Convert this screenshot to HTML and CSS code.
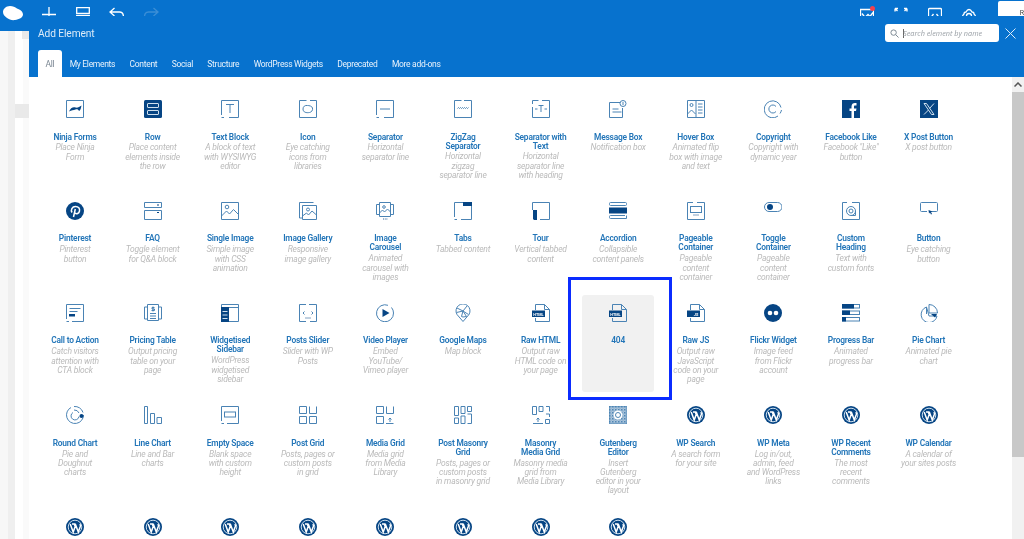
FILE: index.html
```html
<!DOCTYPE html>
<html lang="en">
<head>
<meta charset="utf-8">
<title>Add Element</title>
<link rel="stylesheet" href="styles.css">
</head>
<body>
<svg class="sprite" aria-hidden="true">
<defs>
<pattern id="qr" width="3" height="3" patternUnits="userSpaceOnUse"><rect width="3" height="3" fill="#a9c3da"/><rect width="1.5" height="1.5" fill="#4f86b5"/><rect x="1.5" y="1.5" width="1" height="1" fill="#6f9cc3"/></pattern>
<symbol id="i-ninja" viewBox="0 0 18 18"><path d="M.5 17.5V.5h17v17z"/><path class="s" d="M3 11.5c1.500-3.500 4-5 6.500-4 2 .5 4-.5 6-2-.5 2.500-1 5-2.500 5.500-.5-1.500-2-2-3.500-1.500-2 .5-4 1-6.500 2z"/></symbol>
<symbol id="i-row" viewBox="0 0 18 18"><rect class="s" width="18" height="18" rx="1.500"/><rect class="w" x="3.500" y="3.500" width="11" height="4" rx=".5"/><rect class="w" x="3.500" y="10.500" width="11" height="4" rx=".5"/></symbol>
<symbol id="i-text" viewBox="0 0 18 18"><path d="M.5 15V.5h17v17H8M3 17.500H.5"/><path d="M5 4.500h8M9 4.500V13"/></symbol>
<symbol id="i-icon" viewBox="0 0 18 18"><path d="M11 .5h6.500v17H.5V.5h7"/><path d="M4 9c0-2.500 2-4 4.500-3.500 1.500 0 4.500.5 5 2.500.5 2.500-1 4-3 4.500-3 .5-6.500 0-6.500-3.500z"/></symbol>
<symbol id="i-sep" viewBox="0 0 18 18"><path d="M.5 15V.5h17v17H8M3 17.500H.5"/><path d="M4 9h10"/></symbol>
<symbol id="i-zig" viewBox="0 0 18 18"><path d="M10 .5h7.500v17H.5V.5h7"/><path d="M3.500 8.500l1-1 1 1 1-1 1 1 1-1 1 1 1-1 1 1 1-1 1 1 1-1"/></symbol>
<symbol id="i-septext" viewBox="0 0 18 18"><path d="M10 .5h7.500v17H.5V7M.5 4V.5h6"/><path d="M3 9h2.500M12.500 9H15M6.500 5.500h5M9 5.500V12"/></symbol>
<symbol id="i-msg" viewBox="0 0 18 18"><path d="M11 2.500H.5v15h13V8"/><path d="M3.500 9h6M3.500 12h9"/><circle cx="14" cy="3.500" r="3"/><path d="M14 2v3"/></symbol>
<symbol id="i-hover" viewBox="0 0 18 18"><path d="M.5.500h17v17H.5zM9 .5v17"/><circle cx="4.500" cy="5" r="1.500"/><path d="M.5 14l4-4 4 4M11 4h4.500M11 7h4.500M11 10h4.500M11 13h4.500"/></symbol>
<symbol id="i-copy" viewBox="0 0 18 18"><path d="M17 7.500A8.500 8.500 0 1 0 14 16"/><path d="M17.500 10a8.500 8.500 0 0 1-1.500 3.500"/><path d="M12 6.500a4 4 0 1 0 0 5"/></symbol>
<symbol id="i-fb" viewBox="0 0 18 18"><rect class="s" width="18" height="18"/><path class="k" d="M9.500 18v-7H7.500V8.500h2V6.500C9.500 4 11 3 13 3h1.500v2.500H13c-.8 0-1 .5-1 1.200v1.800h2.500l-.5 2.500h-2v7z"/></symbol>
<symbol id="i-x" viewBox="0 0 18 18"><rect class="s" width="18" height="18"/><path class="w" d="M4 3.500h2.500l7.500 11h-2.500zM14 3.500l-4.500 5M8.500 10L4 14.500"/></symbol>
<symbol id="i-pin" viewBox="0 0 18 18"><circle class="s" cx="9" cy="9" r="9"/><path class="w2" d="M6 10.500C4.500 8 6 4.500 9.500 4.500c3 0 4.500 2 4 4.500-.5 2.500-3 3.500-4.500 2M9.300 7L7.500 15"/></symbol>
<symbol id="i-faq" viewBox="0 0 18 18"><path d="M.5.500h17v5H.5zM.5 8.500h17v9H.5z"/><path class="dk" d="M13 3h2M13 10.500h2"/></symbol>
<symbol id="i-img" viewBox="0 0 18 18"><path d="M.5.500h17v17H.5z"/><circle cx="6" cy="5" r="1.800"/><path d="M.5 14l5-5 3 3 4-4.500 5 5"/></symbol>
<symbol id="i-gal" viewBox="0 0 18 18"><path d="M3.500 3.500h14v14h-14zM.5 14V.5h14"/><path d="M.5 14v2h3"/><circle cx="9" cy="7.500" r="1.500"/><path d="M3.500 14l4-3 2 2 3.500-4 4.500 4"/></symbol>
<symbol id="i-car" viewBox="0 0 18 18"><path d="M3.500.5h11v14h-11zM3.500 2.500H.5v10h3M14.500 2.500h3v10h-3"/><circle cx="8" cy="5" r="1.300"/><path d="M3.500 11l3-3 2 2 3-3 3 3"/><path class="dk" d="M7 17h.8M8.800 17h.8M10.500 17h.8"/></symbol>
<symbol id="i-tabs" viewBox="0 0 18 18"><path d="M.5 15V.5h17v17H7M3 17.500H.5"/><rect class="s" x="9" width="9" height="4"/></symbol>
<symbol id="i-tour" viewBox="0 0 18 18"><path d="M.5 8V.5h17v17H8"/><path class="s" d="M1 8h4v10H2l-1-1z"/></symbol>
<symbol id="i-acc" viewBox="0 0 18 18"><rect x=".5" y=".5" width="17" height="3" rx="1"/><rect class="s" y="5.500" width="18" height="6"/><path d="M16 13.500H1.500a1 1 0 0 0-1 1v1a1 1 0 0 0 1 1h16v-3"/></symbol>
<symbol id="i-page" viewBox="0 0 18 18"><path d="M6 .5H.5v17h17V.5H10"/><rect x="3.500" y="4.500" width="11" height="6"/><path class="dk" d="M6.500 13h1M8.500 13h1M10.500 13h1"/></symbol>
<symbol id="i-tog" viewBox="0 0 18 18"><path d="M5 .5h8.500a4.500 4.500 0 0 1 0 9H5a4.500 4.500 0 0 1 0-9z"/><circle class="s" cx="6" cy="5" r="3"/></symbol>
<symbol id="i-head" viewBox="0 0 18 18"><path d="M5 .5H.5v17h17V.5H10"/><circle cx="9" cy="9" r="4.500"/><circle cx="9" cy="9" r="2"/><path d="M13.500 9v4.500H9"/></symbol>
<symbol id="i-btn" viewBox="0 0 18 18"><path d="M10 9.500h6.500a1 1 0 0 0 1-1v-7a1 1 0 0 0-1-1h-15a1 1 0 0 0-1 1v7a1 1 0 0 0 1 1H7"/><path class="s" d="M8.500 8l4 1.500-1.500.5 1 2-1 .5-1-2-1 1z"/></symbol>
<symbol id="i-cta" viewBox="0 0 18 18"><path d="M.5 15V.5h17v17H6M3 17.500H.5"/><path d="M3.500 4.500h11M3.500 7.500h8"/><rect class="s" x="3" y="10" width="6" height="2.500"/></symbol>
<symbol id="i-price" viewBox="0 0 18 18"><path d="M3.500.5h11v16h-11zM3.500 3H.5v12h3M14.500 3h3v12h-3"/><path d="M6 9.500h6M6 12h6M6 14.500h6M9 2.500v5M10.500 3.500H8v1.500h2.500v1.500H7.500"/></symbol>
<symbol id="i-widget" viewBox="0 0 18 18"><path d="M.5.500h17v17H.5z"/><rect class="s" y="3" width="8" height="15"/><path class="w" d="M1.500 7.500h5M1.500 11h5M1.500 14.500h5"/><path d="M8 3.500h10"/></symbol>
<symbol id="i-posts" viewBox="0 0 18 18"><path d="M10 .5h7.500v17H11M7 17.500H.5V.5H7"/><path d="M5.500 7.500L4 9l1.500 1.500M12.500 7.500L14 9l-1.500 1.500"/><path class="dk" d="M6.500 14h1M8.500 14h1M10.500 14h1"/></symbol>
<symbol id="i-video" viewBox="0 0 18 18"><path d="M12 1.300A8.500 8.500 0 1 0 17.500 9a8.500 8.500 0 0 0-2-5.500"/><path class="s" d="M6.500 5l7 4-7 4z"/></symbol>
<symbol id="i-map" viewBox="0 0 18 18"><path d="M9 17.500L3 10.500A7 7 0 1 1 15 10.500z"/><path d="M3 4l6 3 4-5M2.500 8.500L9 7l5.500 3.500M9 7l-1.500 5.500L9 13l3.500-.5L9 7"/></symbol>
<symbol id="i-html" viewBox="0 0 18 18"><path d="M3.500 6V.5h9l5 5v12h-14V14"/><path d="M12.500.5v5h5"/><rect class="s" y="6.500" width="13" height="6.500"/><text class="lbl" x="6.500" y="11.500">HTML</text></symbol>
<symbol id="i-js" viewBox="0 0 18 18"><path d="M3.500 6V.5h9l5 5v12h-14V14"/><path d="M12.500.5v5h5"/><rect class="s" y="6.500" width="13" height="6.500"/><text class="lbl" x="9" y="11.500">JS</text></symbol>
<symbol id="i-flickr" viewBox="0 0 18 18"><circle class="s" cx="9" cy="9" r="9"/><circle class="k" cx="6" cy="9" r="2.300"/><circle class="k" cx="12" cy="9" r="2.300"/></symbol>
<symbol id="i-prog" viewBox="0 0 18 18"><rect x=".5" y=".5" width="17" height="3.500"/><rect class="s" width="12" height="4.500"/><rect x=".5" y="7" width="17" height="3.500"/><rect class="s" y="6.500" width="8" height="4.500"/><rect x=".5" y="13.500" width="17" height="3.500"/><rect class="s" y="13" width="4" height="4.500"/></symbol>
<symbol id="i-pie" viewBox="0 0 18 18"><path d="M6.500 3A8 8 0 1 0 17 12H9zM6.500 3v7"/><path d="M9 .5a8.500 8.500 0 0 1 8.500 8.500H9z"/><path class="s" d="M11 10h6l-2 3.500z"/></symbol>
<symbol id="i-round" viewBox="0 0 18 18"><path d="M5 1.500A8.500 8.500 0 1 0 17.500 9"/><path d="M8 .5a8.500 8.500 0 0 1 9 6M7 6.500a4 4 0 1 0 6 4"/><path d="M8 4a5 5 0 0 1 5 3"/><circle class="s" cx="15.500" cy="10" r="2"/></symbol>
<symbol id="i-line" viewBox="0 0 18 18"><path d="M.5.500h3v17h-3zM6.500 7.500h4v10h-4zM13 11.500h4.500v6H13z"/></symbol>
<symbol id="i-empty" viewBox="0 0 18 18"><path d="M.5 15V.5h17v17H6M3 17.500H.5"/><rect x="3.500" y="6" width="11" height="5"/></symbol>
<symbol id="i-pgrid" viewBox="0 0 18 18"><path d="M.5.500h7v7h-7zM10.500 7.500h7V.5M10.500.5v7M.5 10.500h7v7h-7zM10.500 10.500h7v7h-7z"/></symbol>
<symbol id="i-mgrid" viewBox="0 0 18 18"><path d="M.5.500h7v7h-7zM10.500.5v7h7V.5M.5 10.500h7v7h-7zM10 17.500h7.500M14 16v-4M12.500 13.500L14 12l1.500 1.500"/></symbol>
<symbol id="i-mas" viewBox="0 0 18 18"><path d="M.5.500h4v9h-4zM7 .5h4v7H7zM13.500.5h4v5h-4zM.5 12h4v5.500h-4zM7 10h4v7.500H7zM13.500 8h4v9.500h-4"/></symbol>
<symbol id="i-mmas" viewBox="0 0 18 18"><path d="M.5.500h4v8h-4zM7 .5h4v5H7zM14 .5h3.500v5M14 8h3.500v3M1 17.500H11M6 16v-4M4.500 13.500L6 12l1.500 1.500M13.500 13.500h4v4h-4z"/></symbol>
<symbol id="i-gut" viewBox="0 0 18 18"><rect width="18" height="18" fill="url(#qr)"/><circle class="k" cx="9" cy="9" r="4.500"/><circle class="ring" cx="9" cy="9" r="2.500"/></symbol>
<symbol id="i-wp" viewBox="0 0 18 18"><circle class="s" cx="9" cy="9" r="9"/><circle class="w" cx="9" cy="9" r="6.800"/><path class="w2" d="M4.200 6l3 8 2-5.500-1-2.500M6 6h3.500M9.300 6l3 8 2-5.500c.3-1 0-2-.5-2.500"/></symbol>
</defs>
</svg>

<div class="app">
  <header class="topbar">
    <svg class="logo" viewBox="0 0 20 15"><path class="k" d="M0 6c0-3 3-6 7-6 3 0 5 1 7 2.500 3 1 6 3 6 6 0 3-4 5-8 5.500-3 .5-6-.5-8-2S0 9 0 6z"/></svg>
    <div class="tools">
      <svg class="tool" viewBox="0 0 14 14"><path d="M7 0v14M0 7.500h14"/></svg>
      <svg class="tool" viewBox="0 0 14 14"><path d="M.7.700h12.600v5.600H.7zM.7 14V8.500h12.600V14"/></svg>
      <svg class="tool wide" viewBox="0 0 15 14"><path d="M5.500 1L1 5l4.500 4M1 5h9.500c3 0 4 2 4 5"/></svg>
      <svg class="tool wide off" viewBox="0 0 15 14"><path d="M9.500 1L14 5 9.500 9M14 5H4.500c-3 0-4 2-4 5"/></svg>
    </div>
    <div class="status">
      <span class="chart"><svg class="tool" viewBox="0 0 14 14"><path d="M.5 14V1.500h13V14M2 5.500l3 4 3-3 2 2 3-4"/></svg><i class="dot"></i></span>
      <svg class="tool" viewBox="0 0 14 14"><path d="M1 1.500l2.500 2.500M1 1.500h3M1 1.500v3M13 1.500L10.500 4M13 1.500h-3M13 1.500v3"/></svg>
      <svg class="tool" viewBox="0 0 14 14"><path d="M.5 14V2.500a1 1 0 0 1 1-1h11a1 1 0 0 1 1 1V14M5.500 7L4 9l1.500 2M8.500 7L10 9l-1.500 2"/></svg>
      <svg class="tool" viewBox="0 0 14 14"><path d="M.5 10c0-2 1-2.500 1.500-3 0-1.500 1-2 2-2 .5-1 1.500-2.500 3-2.500S9.500 4 10 5c1 0 2 .5 2 2 .5.500 1.500 1 1.500 3"/><circle cx="7" cy="9" r="2.500"/></svg>
      <div class="user-tab"><span>R</span></div>
    </div>
  </header>

  <div class="backdrop">
    <div class="rail"></div>
    <div class="strip">
      <div class="strip-block short"></div>
      <div class="strip-block"></div>
    </div>
  </div>

  <section class="modal">
    <div class="modal-head">
      <div class="title-row">
        <h2 class="modal-title">Add Element</h2>
        <div class="search">
          <svg class="search-ic" viewBox="0 0 10 10"><circle cx="4" cy="4" r="3"/><path d="M6.300 6.300L9.500 9.500"/></svg>
          <span class="caret"></span><span class="placeholder">Search element by name</span>
        </div>
        <svg class="close" viewBox="0 0 11 11"><path d="M.5.500l10 10M10.500.5l-10 10"/></svg>
      </div>
      <nav class="tabs">
        <a class="tab active">All</a><a class="tab">My Elements</a><a class="tab">Content</a><a class="tab">Social</a><a class="tab">Structure</a><a class="tab">WordPress Widgets</a><a class="tab">Deprecated</a><a class="tab">More add-ons</a>
      </nav>
    </div>
    <div class="modal-body">
      <div class="grid">
        <div class="cell"><svg class="ic"><use href="#i-ninja"/></svg><h3 class="t">Ninja Forms</h3><p class="d">Place Ninja<br>Form</p></div>
        <div class="cell"><svg class="ic"><use href="#i-row"/></svg><h3 class="t">Row</h3><p class="d">Place content<br>elements inside<br>the row</p></div>
        <div class="cell"><svg class="ic"><use href="#i-text"/></svg><h3 class="t">Text Block</h3><p class="d">A block of text<br>with WYSIWYG<br>editor</p></div>
        <div class="cell"><svg class="ic"><use href="#i-icon"/></svg><h3 class="t">Icon</h3><p class="d">Eye catching<br>icons from<br>libraries</p></div>
        <div class="cell"><svg class="ic"><use href="#i-sep"/></svg><h3 class="t">Separator</h3><p class="d">Horizontal<br>separator line</p></div>
        <div class="cell"><svg class="ic"><use href="#i-zig"/></svg><h3 class="t">ZigZag<br>Separator</h3><p class="d">Horizontal<br>zigzag<br>separator line</p></div>
        <div class="cell"><svg class="ic"><use href="#i-septext"/></svg><h3 class="t">Separator with<br>Text</h3><p class="d">Horizontal<br>separator line<br>with heading</p></div>
        <div class="cell"><svg class="ic"><use href="#i-msg"/></svg><h3 class="t">Message Box</h3><p class="d">Notification box</p></div>
        <div class="cell"><svg class="ic"><use href="#i-hover"/></svg><h3 class="t">Hover Box</h3><p class="d">Animated flip<br>box with image<br>and text</p></div>
        <div class="cell"><svg class="ic"><use href="#i-copy"/></svg><h3 class="t">Copyright</h3><p class="d">Copyright with<br>dynamic year</p></div>
        <div class="cell"><svg class="ic"><use href="#i-fb"/></svg><h3 class="t">Facebook Like</h3><p class="d">Facebook "Like"<br>button</p></div>
        <div class="cell"><svg class="ic"><use href="#i-x"/></svg><h3 class="t">X Post Button</h3><p class="d">X post button</p></div>

        <div class="cell"><svg class="ic"><use href="#i-pin"/></svg><h3 class="t">Pinterest</h3><p class="d">Pinterest<br>button</p></div>
        <div class="cell"><svg class="ic"><use href="#i-faq"/></svg><h3 class="t">FAQ</h3><p class="d">Toggle element<br>for Q&amp;A block</p></div>
        <div class="cell"><svg class="ic"><use href="#i-img"/></svg><h3 class="t">Single Image</h3><p class="d">Simple image<br>with CSS<br>animation</p></div>
        <div class="cell"><svg class="ic"><use href="#i-gal"/></svg><h3 class="t">Image Gallery</h3><p class="d">Responsive<br>image gallery</p></div>
        <div class="cell"><svg class="ic"><use href="#i-car"/></svg><h3 class="t">Image<br>Carousel</h3><p class="d">Animated<br>carousel with<br>images</p></div>
        <div class="cell"><svg class="ic"><use href="#i-tabs"/></svg><h3 class="t">Tabs</h3><p class="d">Tabbed content</p></div>
        <div class="cell"><svg class="ic"><use href="#i-tour"/></svg><h3 class="t">Tour</h3><p class="d">Vertical tabbed<br>content</p></div>
        <div class="cell"><svg class="ic"><use href="#i-acc"/></svg><h3 class="t">Accordion</h3><p class="d">Collapsible<br>content panels</p></div>
        <div class="cell"><svg class="ic"><use href="#i-page"/></svg><h3 class="t">Pageable<br>Container</h3><p class="d">Pageable<br>content<br>container</p></div>
        <div class="cell"><svg class="ic"><use href="#i-tog"/></svg><h3 class="t">Toggle<br>Container</h3><p class="d">Pageable<br>content<br>container</p></div>
        <div class="cell"><svg class="ic"><use href="#i-head"/></svg><h3 class="t">Custom<br>Heading</h3><p class="d">Text with<br>custom fonts</p></div>
        <div class="cell"><svg class="ic"><use href="#i-btn"/></svg><h3 class="t">Button</h3><p class="d">Eye catching<br>button</p></div>

        <div class="cell"><svg class="ic"><use href="#i-cta"/></svg><h3 class="t">Call to Action</h3><p class="d">Catch visitors<br>attention with<br>CTA block</p></div>
        <div class="cell"><svg class="ic"><use href="#i-price"/></svg><h3 class="t">Pricing Table</h3><p class="d">Output pricing<br>table on your<br>page</p></div>
        <div class="cell"><svg class="ic"><use href="#i-widget"/></svg><h3 class="t">Widgetised<br>Sidebar</h3><p class="d">WordPress<br>widgetised<br>sidebar</p></div>
        <div class="cell"><svg class="ic"><use href="#i-posts"/></svg><h3 class="t">Posts Slider</h3><p class="d">Slider with WP<br>Posts</p></div>
        <div class="cell"><svg class="ic"><use href="#i-video"/></svg><h3 class="t">Video Player</h3><p class="d">Embed<br>YouTube/<br>Vimeo player</p></div>
        <div class="cell"><svg class="ic"><use href="#i-map"/></svg><h3 class="t">Google Maps</h3><p class="d">Map block</p></div>
        <div class="cell"><svg class="ic"><use href="#i-html"/></svg><h3 class="t">Raw HTML</h3><p class="d">Output raw<br>HTML code on<br>your page</p></div>
        <div class="cell selected"><svg class="ic"><use href="#i-html"/></svg><h3 class="t">404</h3></div>
        <div class="cell"><svg class="ic"><use href="#i-js"/></svg><h3 class="t">Raw JS</h3><p class="d">Output raw<br>JavaScript<br>code on your<br>page</p></div>
        <div class="cell"><svg class="ic"><use href="#i-flickr"/></svg><h3 class="t">Flickr Widget</h3><p class="d">Image feed<br>from Flickr<br>account</p></div>
        <div class="cell"><svg class="ic"><use href="#i-prog"/></svg><h3 class="t">Progress Bar</h3><p class="d">Animated<br>progress bar</p></div>
        <div class="cell"><svg class="ic"><use href="#i-pie"/></svg><h3 class="t">Pie Chart</h3><p class="d">Animated pie<br>chart</p></div>

        <div class="cell"><svg class="ic"><use href="#i-round"/></svg><h3 class="t">Round Chart</h3><p class="d">Pie and<br>Doughnut<br>charts</p></div>
        <div class="cell"><svg class="ic"><use href="#i-line"/></svg><h3 class="t">Line Chart</h3><p class="d">Line and Bar<br>charts</p></div>
        <div class="cell"><svg class="ic"><use href="#i-empty"/></svg><h3 class="t">Empty Space</h3><p class="d">Blank space<br>with custom<br>height</p></div>
        <div class="cell"><svg class="ic"><use href="#i-pgrid"/></svg><h3 class="t">Post Grid</h3><p class="d">Posts, pages or<br>custom posts<br>in grid</p></div>
        <div class="cell"><svg class="ic"><use href="#i-mgrid"/></svg><h3 class="t">Media Grid</h3><p class="d">Media grid<br>from Media<br>Library</p></div>
        <div class="cell"><svg class="ic"><use href="#i-mas"/></svg><h3 class="t">Post Masonry<br>Grid</h3><p class="d">Posts, pages or<br>custom posts<br>in masonry grid</p></div>
        <div class="cell"><svg class="ic"><use href="#i-mmas"/></svg><h3 class="t">Masonry<br>Media Grid</h3><p class="d">Masonry media<br>grid from<br>Media Library</p></div>
        <div class="cell"><svg class="ic"><use href="#i-gut"/></svg><h3 class="t">Gutenberg<br>Editor</h3><p class="d">Insert<br>Gutenberg<br>editor in your<br>layout</p></div>
        <div class="cell"><svg class="ic"><use href="#i-wp"/></svg><h3 class="t">WP Search</h3><p class="d">A search form<br>for your site</p></div>
        <div class="cell"><svg class="ic"><use href="#i-wp"/></svg><h3 class="t">WP Meta</h3><p class="d">Log in/out,<br>admin, feed<br>and WordPress<br>links</p></div>
        <div class="cell"><svg class="ic"><use href="#i-wp"/></svg><h3 class="t">WP Recent<br>Comments</h3><p class="d">The most<br>recent<br>comments</p></div>
        <div class="cell"><svg class="ic"><use href="#i-wp"/></svg><h3 class="t">WP Calendar</h3><p class="d">A calendar of<br>your sites posts</p></div>

        <div class="cell"><svg class="ic"><use href="#i-wp"/></svg></div>
        <div class="cell"><svg class="ic"><use href="#i-wp"/></svg></div>
        <div class="cell"><svg class="ic"><use href="#i-wp"/></svg></div>
        <div class="cell"><svg class="ic"><use href="#i-wp"/></svg></div>
        <div class="cell"><svg class="ic"><use href="#i-wp"/></svg></div>
        <div class="cell"><svg class="ic"><use href="#i-wp"/></svg></div>
        <div class="cell"><svg class="ic"><use href="#i-wp"/></svg></div>
        <div class="cell"><svg class="ic"><use href="#i-wp"/></svg></div>
      </div>
      <div class="scrollbar">
        <svg class="sb-arrow" viewBox="0 0 8 5"><path d="M.5 4.500L4 1l3.500 3.500"/></svg>
        <div class="sb-thumb"></div>
      </div>
    </div>
  </section>
</div>
</body>
</html>
```

FILE: styles.css
```css
* { box-sizing: border-box; }
html, body { margin: 0; height: 100%; overflow: hidden; background: #fff; }
body { font-family: Roboto, "Liberation Sans", sans-serif; }
.sprite { position: absolute; width: 0; height: 0; }

.app { position: relative; width: 1024px; height: 539px; overflow: hidden; filter: blur(.4px); }

/* top toolbar behind the modal */
.topbar { display: flex; align-items: flex-start; height: 31px; background: #0772ce; position: relative; }
.logo { width: 20px; height: 15px; margin: 6px 0 0 3px; flex: none; }
.tools { display: flex; gap: 19.500px; margin: 7px 0 0 19px; }
.tool { width: 14px; height: 14px; fill: none; stroke: #fff; stroke-width: 1.300; flex: none; }
.tool.wide { width: 15px; }
.tool.off { stroke: #3b8ed6; }
.status { display: flex; gap: 20px; margin: 1px 0 0 auto; align-items: flex-start; }
.status > .tool, .chart { margin-top: 6px; }
.chart { position: relative; display: block; width: 14px; height: 14px; }
.dot { position: absolute; top: -1px; right: -1px; width: 5px; height: 5px; border-radius: 50%; background: #f2414d; }
.user-tab { width: 26px; height: 15px; margin-left: 2px; background: #fff; border-radius: 2px 0 0 0; position: relative; overflow: hidden; }
.user-tab span { position: absolute; right: 0; top: 8px; font-size: 7px; color: #444; }

/* page visible to the left of the modal */
.backdrop { display: flex; height: 508px; }
.rail { width: 15px; background: linear-gradient(90deg, #f7f7f7 0, #f7f7f7 8px, #efefef 8px); }
.strip { flex: 1; display: flex; flex-direction: column; background: linear-gradient(90deg, #fff 0, #fff 8px, #fafafa 8px); }
.strip-block { height: 14px; background: #e9e9e9; margin-top: 65px; }
.strip-block.short { height: 8px; margin: 0 0 0 7px; }

/* modal */
.modal { position: absolute; left: 29px; top: 16px; right: 0; bottom: 0; display: flex; flex-direction: column; background: #fff; }
.modal-head { height: 61px; background: #0772ce; display: flex; flex-direction: column; padding-left: 9px; flex: none; }
.title-row { display: flex; align-items: center; height: 34px; }
.modal-title { margin: 0; font: 400 10.200px/14px Roboto, sans-serif; letter-spacing: -.1px; color: #dcebf8; flex: 1; padding-top: 1px; }
.search { width: 114px; height: 18px; background: #fff; border-radius: 3px; display: flex; align-items: center; padding-left: 5px; }
.search-ic { width: 9px; height: 9px; fill: none; stroke: #7d8a95; stroke-width: 1.100; flex: none; }
.caret { width: 1px; height: 9px; background: #666; margin-left: 4px; flex: none; }
.placeholder { font: italic 400 7.300px/10px "Open Sans", sans-serif; color: #9aa0a6; margin-left: -1px; white-space: nowrap; }
.close { width: 11px; height: 11px; margin: 0 8px 0 6px; fill: none; stroke: #dcebf8; stroke-width: 1; flex: none; }
.tabs { display: flex; height: 27px; }
.tab { font: 400 8.500px/28px Roboto, sans-serif; letter-spacing: -.3px; color: #e8f2fb; padding: 0 7.200px; white-space: nowrap; }
.tab.active { background: #fff; color: #7b8793; border-radius: 3px 3px 0 0; width: 24px; margin-right: .5px; padding: 0; text-align: center; }

.modal-body { flex: 1; display: flex; min-height: 0; }
.grid { flex: 1; display: grid; grid-template-columns: repeat(12, 72px); column-gap: 5.600px; row-gap: 5px; align-content: start; padding: 14px 0 0 10px; overflow: hidden; }
.cell { padding: 9px 0 7.800px; text-align: center; border-radius: 3px; min-width: 0; }
.ic { display: block; width: 18px; height: 18px; margin: 0 auto; fill: none; stroke: #4a83b4; stroke-width: 1; }
.s { fill: #064584; stroke: none; }
.k { fill: #fff; stroke: none; }
.w { fill: none; stroke: #cfe0ee; stroke-width: 1; }
.w2 { fill: none; stroke: #fff; stroke-width: 1.500; }
.dk { stroke: #064584; }
.ring { fill: none; stroke: #4f86b5; stroke-width: 1; }
.lbl { font: 700 3.800px Roboto, sans-serif; fill: #fff; stroke: none; text-anchor: middle; }
.t { margin: 14.500px 0 0; font: 600 8.400px/9px Roboto, sans-serif; letter-spacing: -.2px; color: #2275b8; }
.d { margin: 1.800px 0 0; font: italic 400 8.500px/9.300px Roboto, sans-serif; letter-spacing: -.2px; color: #bababa; }
.selected { position: relative; background: #f1f1f1; }
.selected::after { content: ""; position: absolute; inset: -18px -18px -8px -14px; border: 3px solid #0b2cff; }

.scrollbar { width: 12px; flex: none; background: #f1f1f1; display: flex; flex-direction: column; align-items: center; }
.sb-arrow { width: 8px; height: 5px; margin: 5px 0 5px; fill: none; stroke: #555; stroke-width: 1.500; flex: none; }
.sb-thumb { width: 100%; height: 365px; background: #c8c8c8; }
```
